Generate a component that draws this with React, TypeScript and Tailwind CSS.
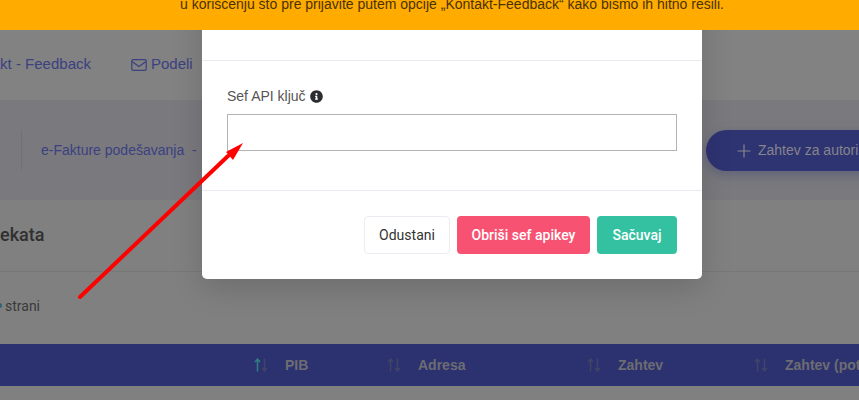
import React from "react";

function Sort({ up }: { up?: boolean }) {
  return (
    <svg width="16" height="16" viewBox="0 0 16 16" fill="none" strokeWidth="1.5" className="shrink-0">
      <g stroke={up ? "#2f7f80" : "#3f4468"}>
        <path d="M4.5 14.5V2.5M2 5l2.5-2.8L7 5" />
      </g>
      <g stroke="#3f4468">
        <path d="M11.5 1.5v12M9 11l2.5 2.8L14 11" />
      </g>
    </svg>
  );
}

export default function App() {
  return (
    <div className="relative h-[400px] w-[859px] overflow-hidden bg-[#808080] font-['Liberation_Sans',Arial,sans-serif]">
      <div className="relative z-30 flex h-[30px] justify-center bg-[#ffab00] pl-[45px] text-[14px] leading-[8px] text-[#4a3200]">
        <span className="whitespace-nowrap">u korišćenju što pre prijavite putem opcije „Kontakt-Feedback“ kako bismo ih hitno rešili.</span>
      </div>

      <nav className="flex h-[70px] items-center gap-[40px] bg-[#828282] pb-[1px] text-[15px] text-[#3b4081]">
        <span className="flex w-[91px] shrink-0 justify-end whitespace-nowrap">Kontakt - Feedback</span>
        <span className="flex items-center gap-[4px]">
          <svg width="16" height="14" viewBox="0 0 16 14" fill="none" stroke="#3b4081" strokeWidth="1.2">
            <rect x="0.8" y="1.6" width="14.4" height="10.8" rx="1.4" />
            <path d="M1 3.5l7 5 7-5" />
          </svg>
          Podeli
        </span>
      </nav>

      <section className="relative flex h-[100px] items-center bg-[#7a7a7e] text-[14px]">
        <div className="ml-[21px] flex h-[40px] items-center border-l border-[#717175] pl-[19px] text-[#3b4081]">
          e-Fakture podešavanja&nbsp;&nbsp;-
        </div>
        <div className="absolute left-[706px] top-[30px] flex h-[41px] w-[220px] items-center gap-[7px] rounded-full bg-[#2e3372] pl-[31px] text-[#85858c] shadow-[0_4px_12px_rgba(46,51,114,0.35)]">
          <svg width="14" height="14" viewBox="0 0 14 14" stroke="#85858c" strokeWidth="1.2" className="shrink-0">
            <path d="M7 0.5v13M0.5 7h13" />
          </svg>
          <span className="whitespace-nowrap">Zahtev za autorizaciju</span>
        </div>
      </section>

      <section className="bg-[#808080]">
        <div className="flex h-[72px] items-center border-b border-[#777] pb-[3px] text-[18px] font-medium text-[#303030] [font-family:Roboto,sans-serif]">
          <span>ekata</span>
        </div>
        <div className="flex h-[72px] items-start pt-[24px] text-[14px] text-[#3a3a3a] [font-family:Roboto,sans-serif]">
          <span className="mr-[3px] ml-[-3px] mt-[7px] size-[5px] shrink-0 rounded-full bg-[#2f5f7f]" />
          <span>strani</span>
        </div>
        <div className="relative flex h-[42px] items-center bg-[#2c3270] text-[14px] font-bold text-[#6c6c72]">
          <div className="ml-[253px] flex w-[133px] shrink-0 items-center gap-[16px]">
            <Sort up />
            <span>PIB</span>
          </div>
          <div className="flex w-[200px] shrink-0 items-center gap-[16px]">
            <Sort />
            <span>Adresa</span>
          </div>
          <div className="flex w-[167px] shrink-0 items-center gap-[16px]">
            <Sort />
            <span>Zahtev</span>
          </div>
          <div className="flex shrink-0 items-center gap-[16px] whitespace-nowrap">
            <Sort />
            <span>Zahtev (potpisan)</span>
          </div>
        </div>
      </section>

      <div className="absolute left-[202px] top-[-20px] z-20 flex h-[299px] w-[500px] flex-col rounded-[5px] bg-white shadow-[0_10px_30px_rgba(0,0,0,0.15)]">
        <div className="flex h-[81px] items-end border-b border-[#e9e9ef] pb-[29px] pl-[25px] text-[18px] leading-[21px] text-[#333]">
          Sef API ključ
        </div>
        <div className="h-[129px] shrink-0 px-[25px] pt-[27px]">
          <label className="flex h-[16px] items-center gap-[4px] text-[14px] text-[#555]">
            Sef API ključ
            <svg width="13" height="13" viewBox="0 0 512 512" fill="#2b2d33">
              <path d="M256 8C119 8 8 119 8 256s111 248 248 248 248-111 248-248S393 8 256 8zm0 110a42 42 0 1 1 0 84 42 42 0 0 1 0-84zm56 254c0 7-5 12-12 12h-88c-7 0-12-5-12-12v-24c0-7 5-12 12-12h12v-64h-12c-7 0-12-5-12-12v-24c0-7 5-12 12-12h64c7 0 12 5 12 12v100h12c7 0 12 5 12 12v24z" />
            </svg>
          </label>
          <input className="mt-[10px] block h-[37px] w-[450px] border border-[#b4b4b4] bg-white outline-none" />
        </div>
        <div className="flex flex-1 items-start justify-end gap-[7px] border-t border-[#e9e9ef] pr-[25px] pt-[25px] text-[14px]">
          <button className="h-[38px] w-[86px] rounded-[4px] border border-[#ececf2] bg-white text-[#333] [font-family:Roboto,sans-serif]">Odustani</button>
          <button className="h-[38px] w-[133px] rounded-[4px] bg-[#f75271] font-medium text-white [font-family:Roboto,sans-serif]">Obriši sef apikey</button>
          <button className="h-[38px] w-[80px] rounded-[4px] bg-[#34c1a2] font-medium text-white [font-family:Roboto,sans-serif]">Sačuvaj</button>
        </div>
      </div>

      <svg className="pointer-events-none absolute left-0 top-0 z-40" width="859" height="400" fill="none">
        <path d="M80 297L228 156" stroke="#ff0000" strokeWidth="4" strokeLinecap="round" />
        <path d="M243 143L226 152L233 160Z" fill="#ff0000" />
      </svg>
    </div>
  );
}
